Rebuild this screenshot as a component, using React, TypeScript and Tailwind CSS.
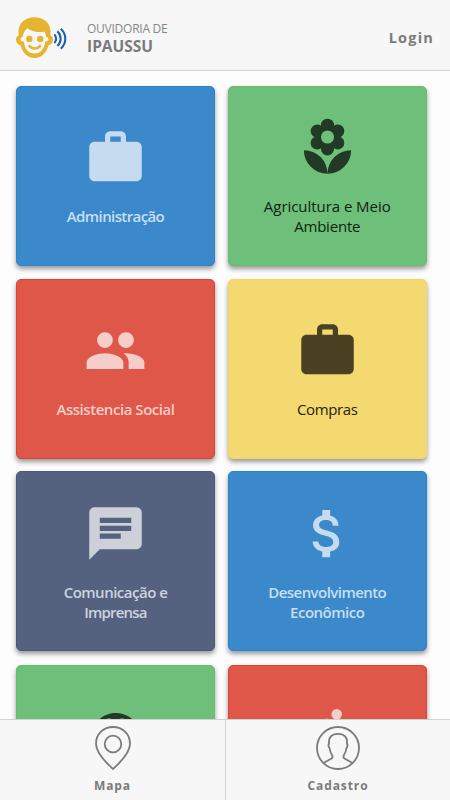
import type { ReactNode } from 'react';
import {
  MdAttachMoney,
  MdChat,
  MdLocalFlorist,
  MdPeople,
  MdWork,
} from 'react-icons/md';

type IconProps = { className?: string };

type Department = {
  name: string;
  lines: { text: string; className: string }[];
  icon: (props: IconProps) => ReactNode;
  card: string;
  iconColor: string;
  textColor: string;
};

const BLUE = 'bg-[#3b89ca] border-[#2a84c9]';
const GREEN = 'bg-[#6dbf79] border-[#66bd73]';
const RED = 'bg-[#df5749] border-[#dc4630]';
const YELLOW = 'bg-[#f4d970] border-[#f3d76a]';
const NAVY = 'bg-[#55627f] border-[#485880]';

function PaletteIcon({ className }: IconProps) {
  return (
    <svg viewBox="0 0 24 24" fill="currentColor" className={className}>
      <path d="M12 3c-4.970 0-9 4.030-9 9s4.030 9 9 9c.83 0 1.500-.67 1.500-1.500 0-.39-.15-.74-.39-1.010-.23-.26-.38-.61-.38-.99 0-.83.67-1.500 1.500-1.500H16c2.760 0 5-2.240 5-5 0-4.420-4.030-8-9-8zm-5.500 9c-.83 0-1.500-.67-1.500-1.500S5.670 9 6.500 9 8 9.670 8 10.500 7.330 12 6.500 12zm3-4C8.670 8 8 7.330 8 6.500S8.670 5 9.500 5s1.500.67 1.500 1.500S10.330 8 9.500 8zm5 0c-.83 0-1.500-.67-1.500-1.500S13.670 5 14.500 5s1.500.67 1.500 1.500S15.330 8 14.500 8zm3 4c-.83 0-1.500-.67-1.500-1.500S16.670 9 17.500 9s1.500.67 1.500 1.500-.67 1.500-1.500 1.500z" />
    </svg>
  );
}

function CyclistIcon({ className }: IconProps) {
  return (
    <svg viewBox="0 0 24 24" fill="none" stroke="currentColor" strokeWidth="2" className={className}>
      <circle cx="15.500" cy="3.500" r="2" fill="currentColor" stroke="none" />
      <circle cx="5" cy="17" r="4" />
      <circle cx="19" cy="17" r="4" />
      <path d="M12 19v-5l-3.500-3.500L11.800 6.200l3.200 3.300h4" strokeLinejoin="round" />
    </svg>
  );
}

const departments: Department[] = [
  {
    name: 'administracao',
    lines: [{ text: 'Administração', className: 'tracking-[-0.6px]' }],
    icon: MdWork,
    card: BLUE,
    iconColor: 'text-[#c6dbef]',
    textColor: 'font-semibold text-[#c6dff3]',
  },
  {
    name: 'agricultura',
    lines: [
      { text: 'Agricultura e Meio', className: 'tracking-[-0.05px]' },
      { text: 'Ambiente', className: 'tracking-[-0.2px]' },
    ],
    icon: MdLocalFlorist,
    card: GREEN,
    iconColor: 'text-[#213925]',
    textColor: 'font-medium text-[#10240f]',
  },
  {
    name: 'assistencia',
    lines: [{ text: 'Assistencia Social', className: 'tracking-[-0.45px]' }],
    icon: MdPeople,
    card: RED,
    iconColor: 'text-[#f5cdc9]',
    textColor: 'font-semibold text-[#f8cdc8]',
  },
  {
    name: 'compras',
    lines: [{ text: 'Compras', className: 'tracking-[-0.4px]' }],
    icon: MdWork,
    card: YELLOW,
    iconColor: 'text-[#494122]',
    textColor: 'font-medium text-[#28220d]',
  },
  {
    name: 'comunicacao',
    lines: [
      { text: 'Comunicação e', className: 'tracking-[-0.5px]' },
      { text: 'Imprensa', className: 'tracking-[-0.8px]' },
    ],
    icon: MdChat,
    card: `-mt-px mb-px pt-[2px] ${NAVY}`,
    iconColor: 'text-[#ccd0d9]',
    textColor: 'font-semibold text-[#cdd3df]',
  },
  {
    name: 'desenvolvimento',
    lines: [
      { text: 'Desenvolvimento', className: 'tracking-[-0.55px]' },
      { text: 'Econômico', className: 'tracking-[-0.5px]' },
    ],
    icon: MdAttachMoney,
    card: `-mt-px mb-px pt-[2px] ${BLUE}`,
    iconColor: 'text-[#c6dbef]',
    textColor: 'font-semibold text-[#c6dff3]',
  },
  {
    name: 'cultura',
    lines: [{ text: '', className: '' }],
    icon: PaletteIcon,
    card: GREEN,
    iconColor: 'text-[#213925]',
    textColor: '',
  },
  {
    name: 'esportes',
    lines: [{ text: '', className: '' }],
    icon: CyclistIcon,
    card: RED,
    iconColor: 'text-[#f5cdc9]',
    textColor: '',
  },
];

function Logo() {
  return (
    <svg width="52" height="44" viewBox="0 0 52 44" fill="none">
      <path
        d="M18.500 1.200C9.500 1.200 3 6.500 2.500 15V19.500C.8 20.200 0 21.500 0 23.500C0 26.800 2 29 4.700 29.500C6.500 37 11.500 42 18.500 42S30.500 37 32.300 29.500C35 29 37 26.800 37 23.500C37 21.500 36.200 20.200 34.500 19.500V15C34 6.500 27.500 1.200 18.500 1.200Z"
        fill="#e7b42f"
      />
      <path
        d="M11.200 12.200C15.500 15.300 21.500 16.800 29 15.800L30.200 20.800C31.800 21.300 32.700 22.300 32.500 23.700C32.200 25 31 25.600 29.200 25.600C28.200 33.500 24.500 37.600 18.500 37.600S8.800 33.500 7.800 25.600C6 25.600 4.800 25 4.500 23.700C4.300 22.300 5.200 21.300 6.800 20.800C7.200 17 8.700 14.200 11.200 12.200Z"
        fill="#f7f7f7"
      />
      <circle cx="13.300" cy="22.900" r="3.200" fill="#e7b42f" />
      <circle cx="24.200" cy="22.900" r="3.200" fill="#e7b42f" />
      <path d="M13.500 30C16 33.300 21.500 33.300 24 30" stroke="#e7b42f" strokeWidth="2.700" strokeLinecap="round" />
      <g stroke="#1a62ae" strokeWidth="2.100">
        <path d="M38.400 18.300C40.500 21 40.500 24.400 38.400 27.100" />
        <path d="M41.400 15.300C45.700 19.700 45.700 25.700 41.400 30.100" />
        <path d="M44.800 12.700C50.800 18.500 50.800 26.900 44.800 32.700" />
      </g>
    </svg>
  );
}

function PinIcon() {
  return (
    <svg width="36" height="44" viewBox="0 0 36 44" fill="none" stroke="#7b7b7b" strokeWidth="1.800">
      <path d="M18 43C12.500 38 1 28 1 17.800C1 8 8.500 1 18 1S35 8 35 17.800C35 28 23.500 38 18 43Z" />
      <circle cx="18" cy="18" r="8.300" />
    </svg>
  );
}

function ProfileIcon() {
  return (
    <svg width="44" height="44" viewBox="0 0 44 44" fill="none" stroke="#7b7b7b" strokeWidth="1.800">
      <circle cx="22" cy="22" r="21" />
      <path d="M8 36.800L15.500 32.500C16.500 31.900 16.800 31 16.300 29.500C14.800 27.500 13.900 25 13.700 22.500C12.200 20.800 12.200 19 13 17.500C12.500 11.500 15.500 7.800 22 7.800S31.500 11.500 31 17.500C31.800 19 31.800 20.800 30.300 22.500C30.100 25 29.200 27.500 27.700 29.500C27.200 31 27.500 31.900 28.500 32.500L36 36.800" />
    </svg>
  );
}

function DepartmentCard({ department }: { department: Department }) {
  const Icon = department.icon;

  return (
    <button
      className={`flex h-[180px] flex-col items-center justify-center rounded-[5px] border shadow-[0_3px_5px_rgba(0,0,0,0.4)] ${department.card}`}
    >
      <Icon className={`size-[63px] shrink-0 ${department.iconColor}`} />
      <span className={`mt-[16.5px] mb-[0.5px] text-[15px] leading-5 ${department.textColor}`}>
        {department.lines.map((line) => (
          <span key={line.text} className={`block min-h-5 whitespace-nowrap ${line.className}`}>
            {line.text}
          </span>
        ))}
      </span>
    </button>
  );
}

function TabButton({ label, children }: { label: string; children: ReactNode }) {
  return (
    <button className="flex flex-col items-center pt-[6px] text-[#7b7b7b] last:border-l last:border-[#d6d6d6]">
      {children}
      <span className="mt-[7px] text-[12px] leading-[18px] font-bold tracking-[0.9px]">{label}</span>
    </button>
  );
}

export default function App() {
  return (
    <div className="flex h-screen flex-col overflow-hidden bg-[#fdfdfd] font-['Open_Sans','Noto_Sans',sans-serif]">
      <header className="flex h-[71px] shrink-0 items-center border-b border-[#cfcfcf] bg-[#f7f7f7] px-4 text-[#7b7b7b]">
        <div className="mt-[5px]">
          <Logo />
        </div>
        <div className="mt-[5px] ml-[19px]">
          <p className="text-[12px] leading-[17px] text-[#868686]">
            <span className="tracking-[-0.25px]">OUVIDORIA DE</span>
          </p>
          <p className="text-[15.500px] leading-[18px] font-bold">IPAUSSU</p>
        </div>
        <button className="mt-[5px] ml-auto text-[14.500px] font-bold tracking-[1.200px]">Login</button>
      </header>

      <main className="grid min-h-0 flex-1 grid-cols-[199px_199.5px] content-start gap-x-[12.5px] gap-y-[13px] overflow-hidden pt-[15px] pl-4">
        {departments.map((department) => (
          <DepartmentCard key={department.name} department={department} />
        ))}
      </main>

      <nav className="grid h-[81px] shrink-0 grid-cols-[225px_225px] border-t border-[#d2d2d2] bg-[#f7f7f7]">
        <TabButton label="Mapa">
          <PinIcon />
        </TabButton>
        <TabButton label="Cadastro">
          <ProfileIcon />
        </TabButton>
      </nav>
    </div>
  );
}
